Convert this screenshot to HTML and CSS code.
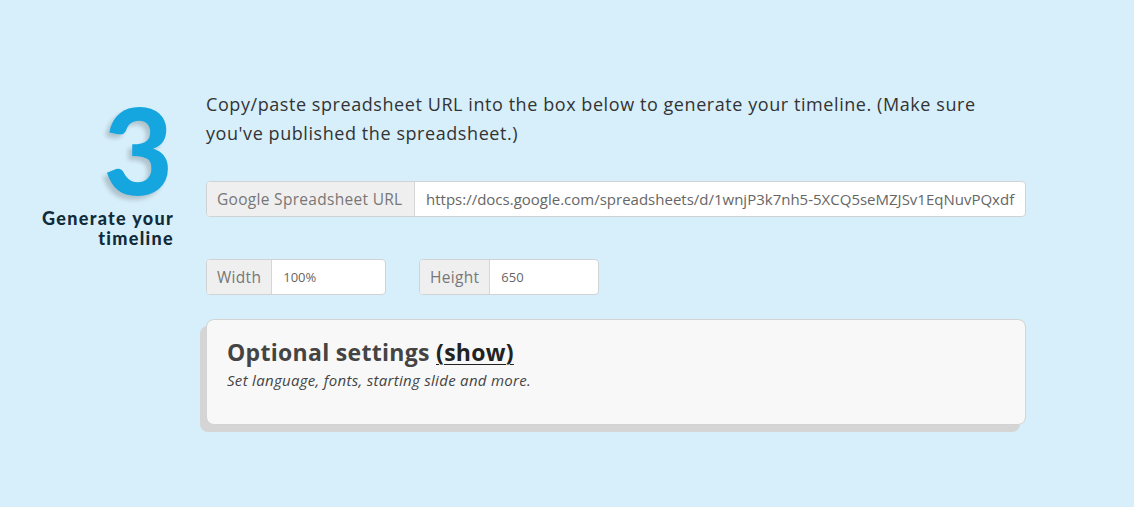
FILE: index.html
```html
<!DOCTYPE html>
<html>
<head>
<meta charset="utf-8">
<link rel="stylesheet" href="styles.css">
</head>
<body>
<div class="step">
  <div class="step-label">
    <div class="step-num">3</div>
    <div class="step-title">Generate your timeline</div>
  </div>
  <div class="step-body">
    <p class="intro">Copy/paste spreadsheet URL into the box below to generate your timeline. (Make sure you've published the spreadsheet.)</p>
    <div class="group url-group">
      <span class="addon">Google Spreadsheet URL</span>
      <span class="field">https://docs.google.com/spreadsheets/d/1wnjP3k7nh5-5XCQ5seMZJSv1EqNuvPQxdf</span>
    </div>
    <div class="dims">
      <div class="group dim-group">
        <span class="addon">Width</span>
        <span class="field small">100%</span>
      </div>
      <div class="group dim-group">
        <span class="addon">Height</span>
        <span class="field small">650</span>
      </div>
    </div>
    <div class="card">
      <h2 class="card-title">Optional settings <a class="show">(show)</a></h2>
      <p class="card-sub">Set language, fonts, starting slide and more.</p>
    </div>
  </div>
</div>
</body>
</html>
```
FILE: styles.css
```css
html, body {
  margin: 0;
  padding: 0;
  background: #d7effb;
  font-family: "Open Sans", "Liberation Sans", sans-serif;
  color: #333;
}
.step {
  display: flex;
  padding-top: 90px;
  height: 507px;
  box-sizing: border-box;
}
.step-label {
  width: 174px;
  flex: none;
  text-align: right;
}
.step-num {
  font-family: "Lato", sans-serif;
  font-weight: 900;
  font-size: 120px;
  line-height: 118px;
  color: #15a6df;
  padding-right: 1px;
  text-shadow: -4px 4px 4px rgba(0, 0, 0, 0.18);
}
.step-title {
  font-family: "Lato", sans-serif;
  font-weight: 900;
  font-size: 18px;
  line-height: 20px;
  color: #112b3a;
  letter-spacing: 1.3px;
  margin-top: 0;
  padding-left: 10px;
}
.step-body {
  margin-left: 32px;
  width: 820px;
}
.intro {
  margin: 0;
  font-size: 18px;
  line-height: 29px;
  color: #333;
  letter-spacing: 0.57px;
  width: 800px;
}
.group {
  display: flex;
  border: 1px solid #cfd3d5;
  border-radius: 4px;
  overflow: hidden;
  height: 36px;
  box-sizing: border-box;
  background: #fff;
}
.url-group {
  margin-top: 33px;
}
.addon {
  flex: none;
  white-space: nowrap;
  background: #efefef;
  color: #777;
  font-size: 15.5px;
  letter-spacing: 0.3px;
  display: flex;
  align-items: center;
  padding: 0 10px;
  border-right: 1px solid #d6d6d6;
}
.url-group .addon {
  width: 208px;
  box-sizing: border-box;
}
.field {
  display: flex;
  align-items: center;
  padding: 0 11px;
  font-size: 15px;
  color: #666;
  white-space: nowrap;
  overflow: hidden;
  flex: 1;
}
.field.small {
  font-size: 13px;
  padding-left: 11px;
}
.dims {
  display: flex;
  gap: 33px;
  margin-top: 42px;
}
.dim-group {
  width: 180px;
}
.card {
  margin-top: 24px;
  background: #f8f8f8;
  border: 1px solid #d3d3d3;
  border-radius: 8px;
  box-shadow: -6px 7px 0 #d5d5d5;
  height: 106px;
  box-sizing: border-box;
  padding: 17px 20px;
}
.card-title {
  margin: 0;
  font-size: 23px;
  font-weight: 700;
  color: #444;
  line-height: 30px;
  letter-spacing: 0.3px;
}
.show {
  color: #222;
  text-decoration: underline;
  text-decoration-thickness: 1px;
  text-underline-offset: 3px;
}
.card-sub {
  margin: 3px 0 0;
  font-size: 15px;
  font-style: italic;
  color: #444;
  letter-spacing: 0.3px;
}
```
